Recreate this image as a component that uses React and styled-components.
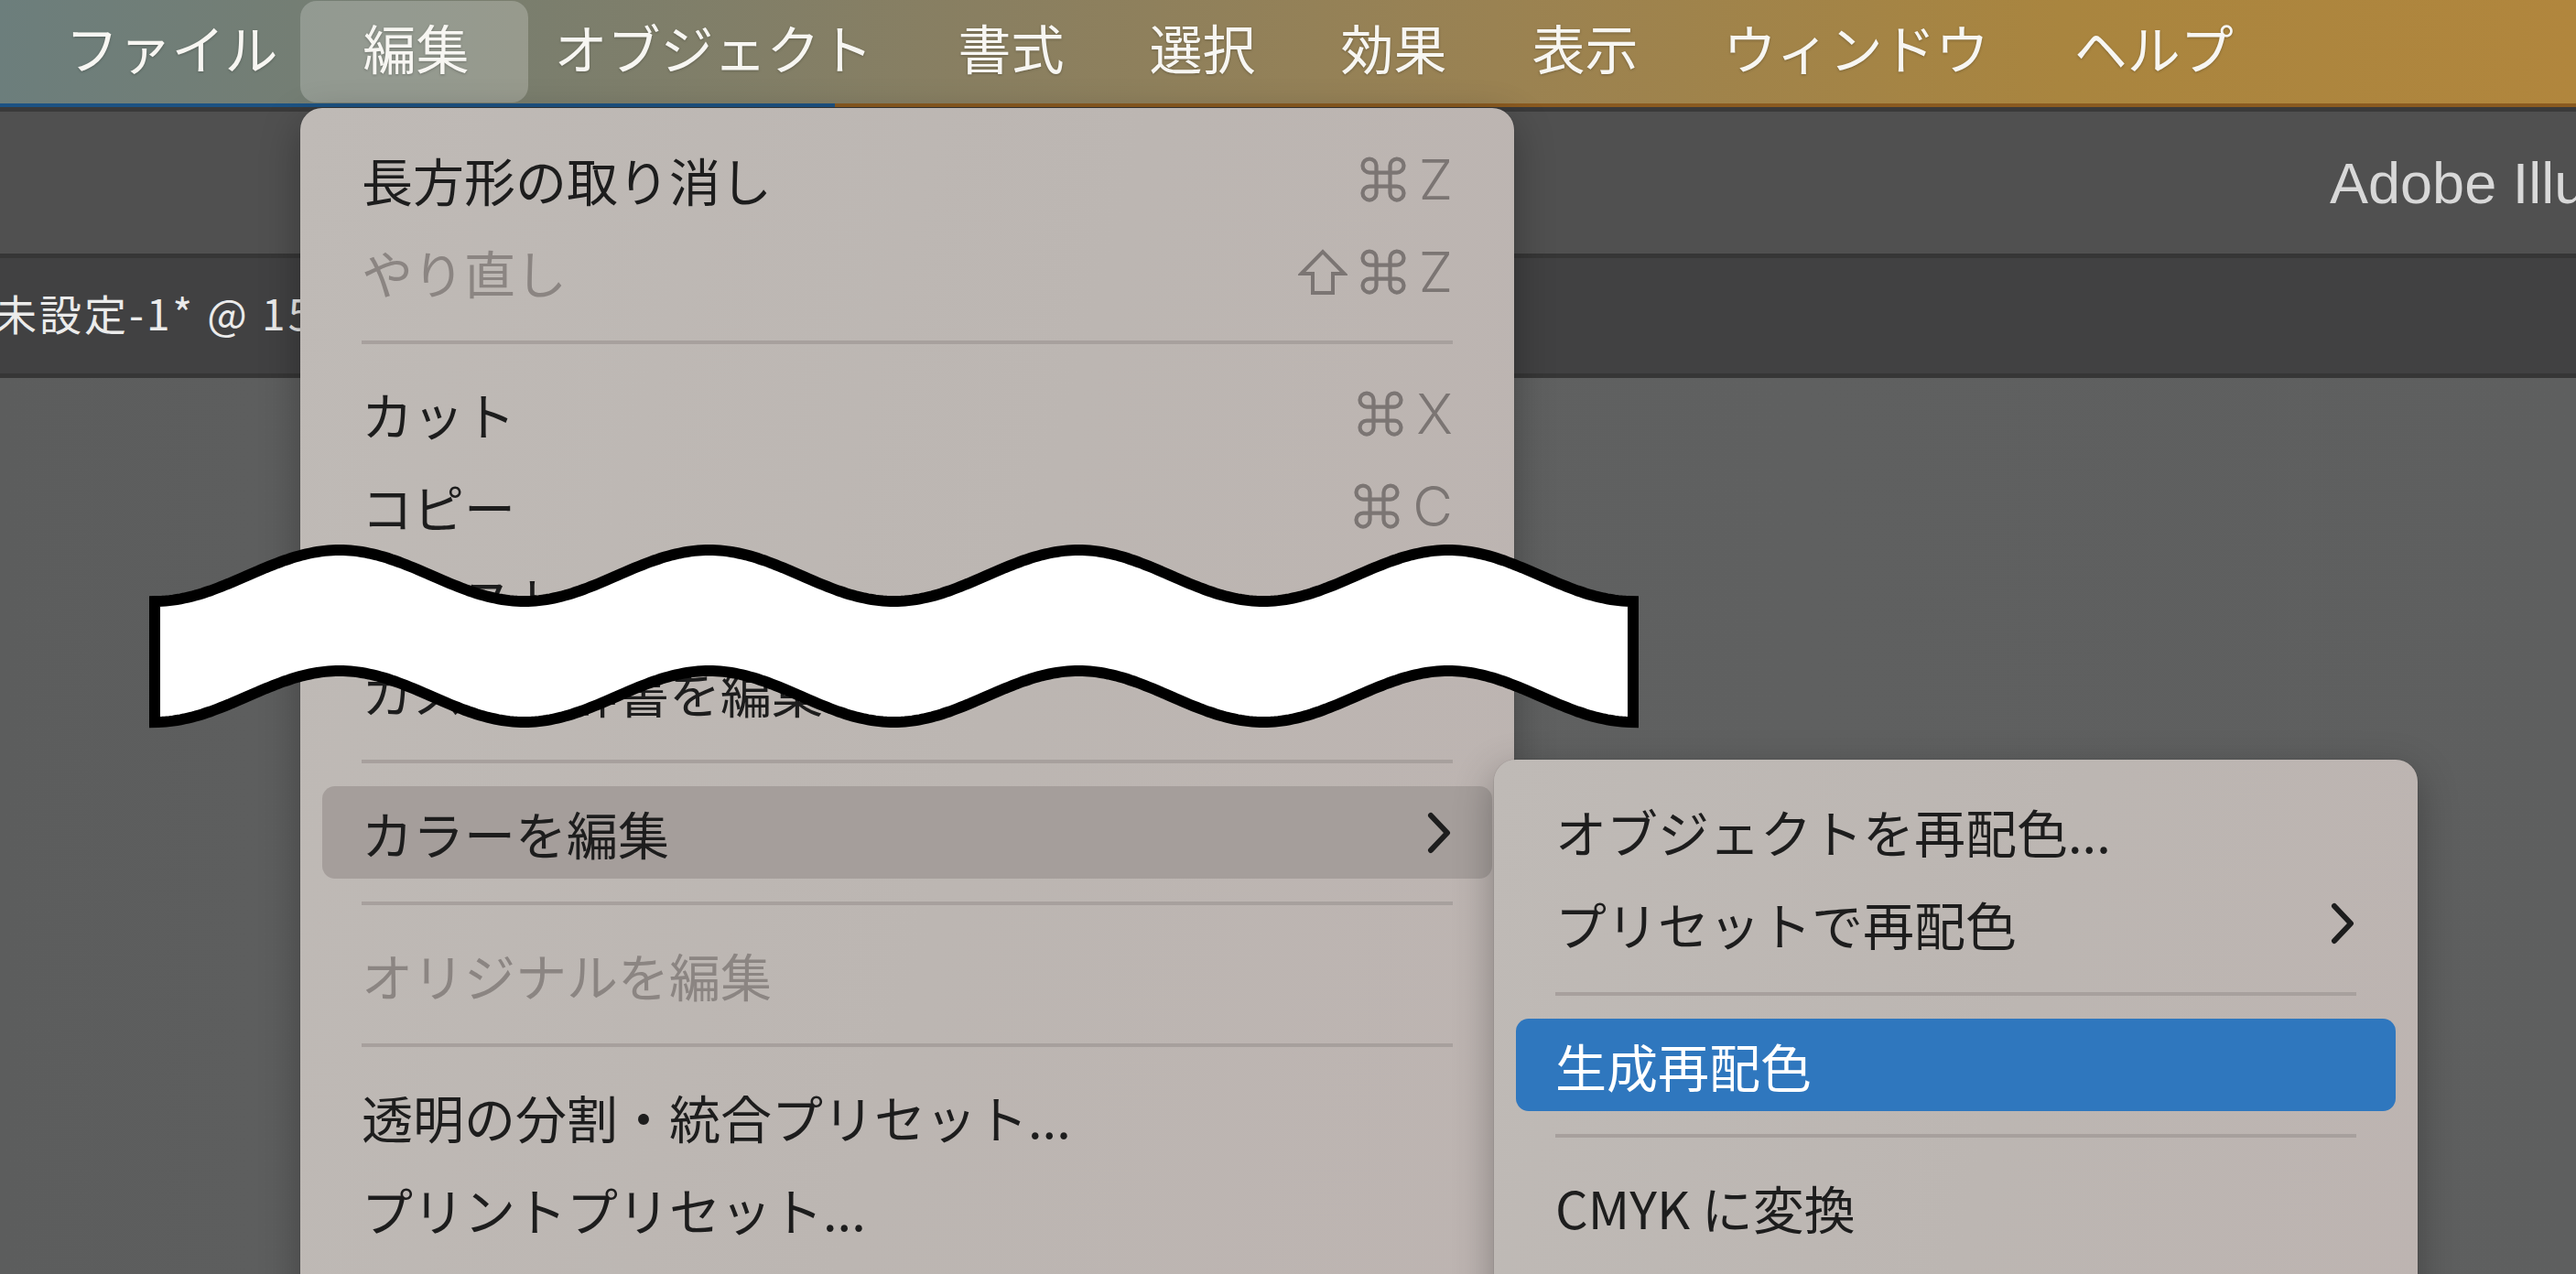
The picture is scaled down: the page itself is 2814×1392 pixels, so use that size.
import React from "react";
import styled, { createGlobalStyle } from "styled-components";
import { Command } from "lucide-react";

const jp = `"Noto Sans CJK JP", "Noto Sans", sans-serif`;

const GlobalStyle = createGlobalStyle`
   html, body {
      margin: 0;
      padding: 0;
      overflow: hidden;
      background: #5e5f5f;
   }
   body {
      font-family: ${jp};
   }
`

const Screen = styled.div`
   position: relative;
   width: 2814px;
   height: 1392px;
   overflow: hidden;
   display: flex;
   flex-direction: column;
   background: #5e5f5f;
   font-family: ${jp};
`

// ---- system menu bar ----

const MenuBar = styled.nav`
   display: flex;
   align-items: stretch;
   height: 113px;
   padding-left: 25px;
   flex-shrink: 0;
   background: linear-gradient(90deg, #6c7e7c 0%, #7a7e6e 20%, #897f61 38%, #9a8252 58%, #a9853f 80%, #b1863d 100%);
`

const BarItem = styled.div`
   position: relative;
   isolation: isolate;
   display: flex;
   align-items: center;
   padding: 0 46.5px 12px;
   font-size: 58px;
   line-height: 1;
   color: #f7f6f2;
   text-shadow: 0 1px 3px rgba(0, 0, 0, 0.25);
   white-space: nowrap;

   ${props => props.$active && `
      &::before {
         content: "";
         position: absolute;
         z-index: -1;
         top: 1px;
         bottom: 1px;
         left: -22.5px;
         right: -17.5px;
         border-radius: 18px;
         background: rgba(255, 255, 255, 0.22);
      }
   `}
`

const BarRule = styled.div`
   height: 4px;
   flex-shrink: 0;
   background: linear-gradient(90deg, #1c5283 0, #1c5283 912px, #8a5a20 912px);
`

// ---- application window ----

const TitleBar = styled.div`
   display: flex;
   align-items: center;
   height: 155px;
   flex-shrink: 0;
   padding-left: 2545px;
   border-top: 5px solid #3a3a3a;
   border-bottom: 5px solid #363636;
   background: #505050;
   font-family: "Liberation Sans", Arial, sans-serif;
   font-size: 63px;
   color: #d8d8d8;
   white-space: nowrap;
`

const TabBar = styled.div`
   display: flex;
   align-items: center;
   height: 131px;
   flex-shrink: 0;
   box-sizing: border-box;
   padding-bottom: 8px;
   border-bottom: 5px solid #363636;
   background: #414142;
   white-space: nowrap;
`

const TabLabel = styled.span`
   margin-left: -104px;
   font-size: 46px;
   letter-spacing: 3px;
   line-height: 1;
   color: #ebebeb;
`

const Canvas = styled.div`
   flex: 1;
   background: linear-gradient(90deg, #5c5d5d, #606161 40%, #5e5f5f);
`

// ---- dropdown menus ----

const Panel = styled.div`
   position: absolute;
   left: ${props => props.$left}px;
   top: ${props => props.$top}px;
   width: ${props => props.$width}px;
   box-sizing: border-box;
   padding: 27px 24px;
   border-radius: 24px;
   background: linear-gradient(105deg, #bfbab6 0%, #bcb6b2 55%, #bdb4b1 100%);
   box-shadow: 0 14px 44px rgba(0, 0, 0, 0.3), 0 0 0 1px rgba(0, 0, 0, 0.06);
   z-index: ${props => props.$layer};
`

const Row = styled.div`
   display: flex;
   align-items: center;
   justify-content: space-between;
   height: 101px;
   padding: 0 43px;
   border-radius: 14px;
   font-size: 56px;
   line-height: 1;
   white-space: nowrap;
   color: ${props => props.$tone === "selected" ? "#ffffff" : props.$disabled ? "#8b8582" : "#1d1d1d"};
   background: ${props => props.$tone === "selected" ? "#2f77be" : props.$tone === "open" ? "#a59e9b" : "transparent"};
`

const Separator = styled.div`
   height: 4px;
   margin: 25px 43px;
   background: #a7a09d;
`

const Keys = styled.span`
   display: flex;
   align-items: center;
   gap: 9px;
   color: #7b7573;
`

const KeyLetter = styled.span`
   font-family: Inter, "Liberation Sans", sans-serif;
   font-weight: 300;
   font-size: 60px;
   line-height: 1;
`

const ShiftIcon = () => (
   <svg width="54" height="52" viewBox="0 0 54 52" fill="none" stroke="currentColor" strokeWidth="4" strokeLinejoin="miter">
      <path d="M16 49 V28 H3.5 L27 4 L50.5 28 H38 V49 Z" />
   </svg>
)

const Chevron = () => (
   <svg width="30" height="46" viewBox="0 0 30 46" fill="none" stroke="currentColor" strokeWidth="6" strokeLinecap="round" strokeLinejoin="round">
      <polyline points="6,4 24,23 6,42" />
   </svg>
)

const KeyCombo = ({ keys }) => (
   <Keys>
      {keys.map((k, i) => {
         if (k === "cmd") return <Command key={i} size={60} strokeWidth={1.7} />
         if (k === "shift") return <ShiftIcon key={i} />
         return <KeyLetter key={i}>{k}</KeyLetter>
      })}
   </Keys>
)

const MenuList = ({ items }) => (
   <>
      {items.map((item, i) => {
         if (item === "sep") return <Separator key={i} />
         return (
            <Row key={i} $tone={item.tone} $disabled={item.disabled}>
               <span>{item.label}</span>
               {item.keys && <KeyCombo keys={item.keys} />}
               {item.sub && <Chevron />}
            </Row>
         )
      })}
   </>
)

// ---- omission mark (wavy band) ----

const BreakMark = styled.svg`
   position: absolute;
   left: 150px;
   top: 570px;
   z-index: 5;
   overflow: visible;
`

const WAVE_X0 = 169;
const WAVE_X1 = 1784;

const buildWave = () => {
   const len = (WAVE_X1 - WAVE_X0) / 4;
   const steps = 400;
   const top = [];
   const bottom = [];
   for (let i = 0; i <= steps; i++) {
      const x = WAVE_X0 + (WAVE_X1 - WAVE_X0) * i / steps;
      const c = Math.cos(2 * Math.PI * (x - WAVE_X0) / len);
      top.push(`${x.toFixed(1)},${(629 + 28 * c).toFixed(1)}`);
      bottom.push(`${x.toFixed(1)},${(761 + 28 * c).toFixed(1)}`);
   }
   return `M${top.join(" L")} L${bottom.reverse().join(" L")} Z`;
}

const wavePath = buildWave();

// ---- data ----

const barItems = ["ファイル", "編集", "オブジェクト", "書式", "選択", "効果", "表示", "ウィンドウ", "ヘルプ"];

const editMenu = [
   { label: "長方形の取り消し", keys: ["cmd", "Z"] },
   { label: "やり直し", keys: ["shift", "cmd", "Z"], disabled: true },
   "sep",
   { label: "カット", keys: ["cmd", "X"] },
   { label: "コピー", keys: ["cmd", "C"] },
   { label: "ペースト", keys: ["cmd", "V"] },
   { label: "カスタム辞書を編集..." },
   "sep",
   { label: "カラーを編集", sub: true, tone: "open" },
   "sep",
   { label: "オリジナルを編集", disabled: true },
   "sep",
   { label: "透明の分割・統合プリセット..." },
   { label: "プリントプリセット..." },
   { label: "Adobe PDF プリセット..." },
];

const colorMenu = [
   { label: "オブジェクトを再配色..." },
   { label: "プリセットで再配色", sub: true },
   "sep",
   { label: "生成再配色", tone: "selected" },
   "sep",
   { label: "CMYK に変換" },
   { label: "RGB に変換" },
];

const App = () => {
   return (
      <Screen>
         <GlobalStyle />
         <MenuBar>
            {barItems.map(name => (
               <BarItem key={name} $active={name === "編集"}>{name}</BarItem>
            ))}
         </MenuBar>
         <BarRule />
         <TitleBar>Adobe Illustrator 2024</TitleBar>
         <TabBar>
            <TabLabel>名称未設定-1* @ 150% (CMYK/プレビュー)</TabLabel>
         </TabBar>
         <Canvas />

         <Panel $left={328} $top={118} $width={1326} $layer={2}>
            <MenuList items={editMenu} />
         </Panel>
         <Panel $left={1632} $top={830} $width={1009} $layer={3}>
            <MenuList items={colorMenu} />
         </Panel>

         <BreakMark width="1660" height="250" viewBox="150 570 1660 250">
            <path d={wavePath} fill="#ffffff" stroke="#000000" strokeWidth="12" strokeLinejoin="miter" />
         </BreakMark>
      </Screen>
   )
}

export default App;
